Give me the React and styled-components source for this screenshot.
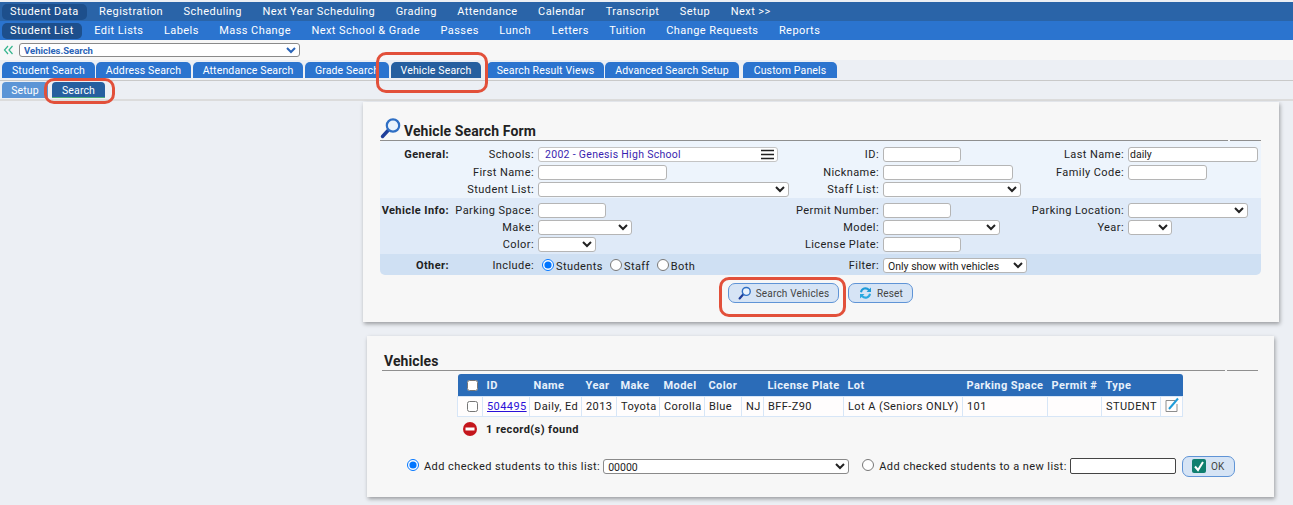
import React from "react";
import styled, { createGlobalStyle } from "styled-components";

const GlobalStyle = createGlobalStyle`
  html, body { margin: 0; padding: 0; background: #eceff4; }
  body { font-family: Roboto, "Liberation Sans", sans-serif; font-size: 11px; letter-spacing: 0.42px; color: #222; }
  * { box-sizing: border-box; }
  input, select, button { font-family: Roboto, "Liberation Sans", sans-serif; }
`;

const Page = styled.div`
  position: relative;
  width: 1293px;
  height: 505px;
  overflow: hidden;
  padding-top: 2px;
`;

/* top menus */
const MainNav = styled.div`
  height: 19px;
  display: flex;
  align-items: center;
  gap: 4px;
  padding-left: 2px;
  background: ${(p) => (p.$sub ? "#2b74cf" : "#2a64a8")};
`;

const NavItem = styled.div`
  height: 16px;
  line-height: 16px;
  padding: 0 8px;
  margin-right: 0.5px;
  border-radius: 5px;
  font-size: 11px;
  font-weight: 400;
  letter-spacing: 0.43px;
  color: #fff;
  white-space: nowrap;
  background: ${(p) => (p.$active ? "#1d4f8c" : "transparent")};
`;

const ViewBar = styled.div`
  height: 20px;
  display: flex;
  align-items: center;
  gap: 5px;
  padding-left: 3px;
  background: #f7f7f7;
`;

const BackChevrons = styled.svg`
  width: 11px;
  height: 10px;
  flex: none;
`;

const ViewSelect = styled.select`
  width: 281px;
  height: 14px;
  padding: 0;
  border: 1px solid #8a8a8a;
  border-radius: 3px;
  background: #fff;
  font-size: 9.5px;
  font-weight: 700;
  color: #2a64b8;
`;

/* tab rows */
const TabBar = styled.div`
  height: 21px;
  display: flex;
  align-items: flex-end;
  padding: 0 0 2px 2px;
  background: #eceff4;
  border-bottom: 1px solid #c9c9c9;
`;

const Tab = styled.div`
  width: ${(p) => p.$width}px;
  margin-left: ${(p) => p.$gap || 0}px;
  height: 16px;
  line-height: 17px;
  text-align: center;
  border-radius: 5px 5px 0 0;
  font-size: 10.5px;
  font-weight: 400;
  letter-spacing: 0.14px;
  color: #fff;
  white-space: nowrap;
  overflow: hidden;
  background: ${(p) => (p.$active ? "#265f9f" : "#2b74cf")};
`;

const SubTabBar = styled.div`
  height: 20px;
  display: flex;
  align-items: center;
  padding-left: 2px;
  background: #eceff4;
  border-bottom: 2px solid #dcdcdc;
`;

const SubTab = styled.div`
  width: ${(p) => p.$width}px;
  margin-left: ${(p) => p.$gap || 0}px;
  height: 16px;
  line-height: 17px;
  text-align: center;
  font-size: 10.5px;
  font-weight: 400;
  letter-spacing: 0.14px;
  color: #fff;
  border-radius: 4px 4px 0 0;
  background: ${(p) => (p.$active ? "#265f9f" : "#5c95d6")};
  border-bottom: 1px solid ${(p) => (p.$active ? "#4fae7a" : "#5c95d6")};
`;

/* page body */
const Content = styled.div`
  display: flex;
  flex-direction: column;
  align-items: flex-start;
  padding-left: 363px;
`;

const FormPanel = styled.div`
  width: 916px;
  height: 220px;
  margin-top: 1px;
  padding: 17px 18px 0 17px;
  background: #f7f7f7;
  box-shadow: 1px 2px 4px rgba(0, 0, 0, 0.35);
`;

const ResultPanel = styled.div`
  width: 907px;
  height: 161px;
  margin: 14px 0 0 4px;
  padding: 13px 16px 0 15px;
  background: #f7f7f7;
  box-shadow: 1px 2px 4px rgba(0, 0, 0, 0.35);
`;

const PanelTitle = styled.div`
  display: flex;
  align-items: flex-end;
  gap: 2px;
  height: 22px;
  padding: 0 0 1px ${(p) => p.$inset || 0}px;
  font-size: 14px;
  font-weight: 700;
  letter-spacing: 0.1px;
  color: #222;
  line-height: 16px;
  border-bottom: 1px solid #8f8f8f;
  position: relative;

  &::after {
    content: "";
    position: absolute;
    right: 31px;
    bottom: -1px;
    width: 2px;
    height: 1px;
    background: #f7f7f7;
  }
`;

/* form grid */
const FormSection = styled.div`
  display: grid;
  grid-template-columns: 70px 88px 252px 93px 140px 105px 133px;
  grid-auto-rows: ${(p) => p.$rowHeight || 17.5}px;
  align-items: center;
  padding: ${(p) => p.$padding || "0"};
  height: ${(p) => p.$height}px;
  background: ${(p) => p.$bg};
  border-radius: ${(p) => p.$radius || "0"};
`;

const SectionLabel = styled.div`
  font-weight: 700;
  text-align: right;
  padding-right: 1px;
  white-space: nowrap;
`;

const FieldLabel = styled.div`
  text-align: right;
  padding-right: 4px;
  white-space: nowrap;
  color: #222;
`;

const Field = styled.div`
  display: flex;
  align-items: center;
  min-width: 0;
  white-space: nowrap;
  padding-left: ${(p) => p.$inset || 0}px;
`;

const TextBox = styled.input`
  width: ${(p) => p.$width}px;
  height: 15px;
  padding: 0 1px;
  border: 1px solid #b5b5b5;
  border-radius: 3px;
  background: #fff;
  font-size: 10.5px;
  letter-spacing: 0;
  color: #222;
  outline: none;
`;

const Dropdown = styled.select`
  width: ${(p) => p.$width}px;
  height: 15px;
  padding: 0;
  border: 1px solid #b5b5b5;
  border-radius: 3px;
  background: #fff;
  font-size: 10.5px;
  letter-spacing: 0;
  color: #222;
  flex: none;
`;

const SchoolBox = styled.div`
  width: 240px;
  height: 15px;
  display: flex;
  align-items: center;
  justify-content: space-between;
  padding: 0 3px 0 6px;
  border: 1px solid #c4c4c4;
  border-radius: 3px;
  background: #fff;
  color: #3a1fb0;
  font-size: 10.5px;
  letter-spacing: 0.3px;
`;

const Burger = styled.svg`
  width: 13px;
  height: 11px;
`;

const RadioGroup = styled.label`
  display: flex;
  align-items: center;
  margin-right: 7px;
  padding-top: 2px;
`;

const Radio = styled.input.attrs({ type: "radio" })`
  width: 12px;
  height: 12px;
  margin: 0 2px 3px 0;
`;

/* buttons under the form */
const ButtonRow = styled.div`
  display: flex;
  justify-content: flex-start;
  gap: 9px;
  padding: 8px 0 0 348px;
`;

const ActionButton = styled.button`
  width: ${(p) => p.$width}px;
  height: 20px;
  display: flex;
  align-items: center;
  justify-content: center;
  gap: 4px;
  padding: 0;
  border: 1px solid #5f94d6;
  border-radius: 7px;
  background: #d6e4f5;
  font-size: 10px;
  letter-spacing: 0.2px;
  color: #444;
`;

/* results */
const TableWrap = styled.div`
  margin: 3px 0 0 75px;
  width: 725px;
`;

const Grid = styled.table`
  width: 725px;
  table-layout: fixed;
  border-collapse: collapse;
`;

const HeadRow = styled.tr`
  height: 22px;
  background: #2b6cb8;
`;

const Th = styled.th`
  padding: 1px 0 0 4px;
  text-align: left;
  font-size: 11px;
  font-weight: 700;
  color: #e8f1fb;
  white-space: nowrap;
  overflow: visible;

  &:first-child { border-radius: 3px 0 0 0; }
  &:last-child { border-radius: 0 3px 0 0; }
`;

const Td = styled.td`
  height: 19px;
  padding: 0 0 0 4px;
  background: #fffdfd;
  border: 1px solid #d7e6f7;
  font-size: 11px;
  white-space: nowrap;
  overflow: hidden;
`;

const CheckCell = styled.div`
  display: flex;
  justify-content: center;
`;

const Check = styled.input.attrs({ type: "checkbox" })`
  width: 11px;
  height: 11px;
  margin: 0;
`;

const IdLink = styled.a`
  color: #2a10d8;
  text-decoration: underline;
`;

const RecordRow = styled.div`
  display: flex;
  align-items: center;
  gap: 9px;
  height: 25px;
  padding-left: 6px;
  font-weight: 700;
  font-size: 11px;
`;

const ListRow = styled.div`
  display: flex;
  align-items: center;
  padding: 14px 0 0 25px;
`;

const ListRadio = styled.input.attrs({ type: "radio" })`
  width: 12px;
  height: 12px;
  margin: 0 5px 3px ${(p) => p.$gap || 0}px;
`;

const ListSelect = styled(Dropdown)`
  width: 246px;
  margin-left: 3px;
  border-color: #8a8a8a;
`;

const NewListBox = styled.input`
  width: 106px;
  height: 16px;
  margin-left: 3px;
  border: 1px solid #444;
  border-radius: 2px;
  background: #fff;
  outline: none;
`;

const OkButton = styled(ActionButton)`
  margin-left: 6px;
  height: 21px;
  gap: 5px;
`;

/* red call-outs drawn on top of the screenshot */
const Callout = styled.div`
  position: absolute;
  left: ${(p) => p.$left}px;
  top: ${(p) => p.$top}px;
  width: ${(p) => p.$width}px;
  height: ${(p) => p.$height}px;
  border: 3px solid #e2503a;
  border-radius: 10px;
  pointer-events: none;
`;

const MagnifierIcon = ({ size }) => (
  <svg width={size} height={size} viewBox="0 0 22 22">
    <line x1="2.5" y1="19.5" x2="8" y2="13.5" stroke="#1f3f9a" strokeWidth="3.4" strokeLinecap="round" />
    <circle cx="13" cy="8.5" r="6.2" fill="#eaf3fc" stroke="#2f6fc4" strokeWidth="2.2" />
  </svg>
);

const topItems = ["Student Data", "Registration", "Scheduling", "Next Year Scheduling", "Grading", "Attendance", "Calendar", "Transcript", "Setup", "Next >>"];
const subItems = ["Student List", "Edit Lists", "Labels", "Mass Change", "Next School & Grade", "Passes", "Lunch", "Letters", "Tuition", "Change Requests", "Reports"];
const tabs = [
  { label: "Student Search", width: 93 },
  { label: "Address Search", width: 95, gap: 1 },
  { label: "Attendance Search", width: 110, gap: 2 },
  { label: "Grade Search", width: 84, gap: 2 },
  { label: "Vehicle Search", width: 90, gap: 2, active: true },
  { label: "Search Result Views", width: 117, gap: 6 },
  { label: "Advanced Search Setup", width: 134, gap: 1 },
  { label: "Custom Panels", width: 94, gap: 4 },
];
const columns = [25, 47, 52, 35, 43, 45, 37, 22, 80, 119, 85, 54, 59, 22];
const heads = ["", "ID", "Name", "Year", "Make", "Model", "Color", "", "License Plate", "Lot", "Parking Space", "Permit #", "Type", ""];

const App = () => {
  return (
    <Page>
      <GlobalStyle />
      <MainNav>
        {topItems.map((item, i) => (
          <NavItem key={item} $active={i === 0}>{item}</NavItem>
        ))}
      </MainNav>
      <MainNav $sub>
        {subItems.map((item, i) => (
          <NavItem key={item} $active={i === 0}>{item}</NavItem>
        ))}
      </MainNav>

      <ViewBar>
        <BackChevrons viewBox="0 0 11 10">
          <path d="M5 1 1.5 5 5 9M9.5 1 6 5l3.5 4" fill="none" stroke="#35b58d" strokeWidth="1.2" />
        </BackChevrons>
        <ViewSelect defaultValue="v">
          <option value="v">Vehicles.Search</option>
        </ViewSelect>
      </ViewBar>

      <TabBar>
        {tabs.map((tab) => (
          <Tab key={tab.label} $width={tab.width} $gap={tab.gap} $active={tab.active}>{tab.label}</Tab>
        ))}
      </TabBar>
      <SubTabBar>
        <SubTab $width={46}>Setup</SubTab>
        <SubTab $width={53} $gap={4} $active>Search</SubTab>
      </SubTabBar>

      <Content>
        <FormPanel>
          <PanelTitle>
            <MagnifierIcon size={22} />
            Vehicle Search Form
          </PanelTitle>

          <FormSection $bg="#edf4fc" $height={57} $padding="5px 0 0" $radius="4px 4px 0 0">
            <SectionLabel>General:</SectionLabel>
            <FieldLabel>Schools:</FieldLabel>
            <Field>
              <SchoolBox>
                2002 - Genesis High School
                <Burger viewBox="0 0 13 11">
                  <path d="M0 1.5h13M0 5.5h13M0 9.5h13" stroke="#222" strokeWidth="1.6" />
                </Burger>
              </SchoolBox>
            </Field>
            <FieldLabel>ID:</FieldLabel>
            <Field><TextBox $width={78} /></Field>
            <FieldLabel>Last Name:</FieldLabel>
            <Field><TextBox $width={130} defaultValue="daily" /></Field>

            <div />
            <FieldLabel>First Name:</FieldLabel>
            <Field><TextBox $width={129} /></Field>
            <FieldLabel>Nickname:</FieldLabel>
            <Field><TextBox $width={130} /></Field>
            <FieldLabel>Family Code:</FieldLabel>
            <Field><TextBox $width={79} /></Field>

            <div />
            <FieldLabel>Student List:</FieldLabel>
            <Field><Dropdown $width={251} /></Field>
            <FieldLabel>Staff List:</FieldLabel>
            <Field><Dropdown $width={138} /></Field>
          </FormSection>

          <FormSection $bg="#dfeaf8" $height={56} $padding="4px 0 0" $rowHeight={17}>
            <SectionLabel>Vehicle Info:</SectionLabel>
            <FieldLabel>Parking Space:</FieldLabel>
            <Field><TextBox $width={68} /></Field>
            <FieldLabel>Permit Number:</FieldLabel>
            <Field><TextBox $width={68} /></Field>
            <FieldLabel>Parking Location:</FieldLabel>
            <Field><Dropdown $width={120} /></Field>

            <div />
            <FieldLabel>Make:</FieldLabel>
            <Field><Dropdown $width={94} /></Field>
            <FieldLabel>Model:</FieldLabel>
            <Field><Dropdown $width={117} /></Field>
            <FieldLabel>Year:</FieldLabel>
            <Field><Dropdown $width={44} /></Field>

            <div />
            <FieldLabel>Color:</FieldLabel>
            <Field><Dropdown $width={58} /></Field>
            <FieldLabel>License Plate:</FieldLabel>
            <Field><TextBox $width={78} /></Field>
          </FormSection>

          <FormSection $bg="#cfe0f3" $height={21} $rowHeight={22} $radius="0 0 5px 5px">
            <SectionLabel>Other:</SectionLabel>
            <FieldLabel>Include:</FieldLabel>
            <Field $inset={4}>
              <RadioGroup><Radio name="inc" defaultChecked />Students</RadioGroup>
              <RadioGroup><Radio name="inc" />Staff</RadioGroup>
              <RadioGroup><Radio name="inc" />Both</RadioGroup>
            </Field>
            <FieldLabel>Filter:</FieldLabel>
            <Field>
              <Dropdown $width={144} defaultValue="o">
                <option value="o">Only show with vehicles</option>
              </Dropdown>
            </Field>
          </FormSection>

          <ButtonRow>
            <ActionButton $width={111}>
              <MagnifierIcon size={14} />
              Search Vehicles
            </ActionButton>
            <ActionButton $width={65}>
              <svg width="15" height="14" viewBox="0 0 15 14">
                <path d="M2 6a5.5 5.5 0 0 1 9.5-3L13 1.500V6H8.500l1.500-1.500A3.500 3.500 0 0 0 4 6.500z" fill="#1f9bd8" />
                <path d="M13 8a5.500 5.500 0 0 1-9.500 3L2 12.500V8h4.500L5 9.500A3.500 3.500 0 0 0 11 7.500z" fill="#2aa9e0" />
              </svg>
              Reset
            </ActionButton>
          </ButtonRow>
        </FormPanel>

        <ResultPanel>
          <PanelTitle $inset={2}>Vehicles</PanelTitle>
          <TableWrap>
            <Grid>
              <colgroup>
                {columns.map((w, i) => (
                  <col key={i} width={w} />
                ))}
              </colgroup>
              <thead>
                <HeadRow>
                  {heads.map((head, i) => (
                    <Th key={i}>
                      {i === 0 ? <CheckCell><Check /></CheckCell> : head}
                    </Th>
                  ))}
                </HeadRow>
              </thead>
              <tbody>
                <tr>
                  <Td><CheckCell><Check /></CheckCell></Td>
                  <Td><IdLink href="#">504495</IdLink></Td>
                  <Td>Daily, Ed</Td>
                  <Td>2013</Td>
                  <Td>Toyota</Td>
                  <Td>Corolla</Td>
                  <Td>Blue</Td>
                  <Td>NJ</Td>
                  <Td>BFF-Z90</Td>
                  <Td>Lot A (Seniors ONLY)</Td>
                  <Td>101</Td>
                  <Td />
                  <Td>STUDENT</Td>
                  <Td>
                    <svg width="15" height="16" viewBox="0 0 15 16">
                      <path d="M1 3.500h9M1 3.500v11h11V7" fill="none" stroke="#8d8d8d" strokeWidth="1" />
                      <path d="M4 12 13 1.500" stroke="#1f9bd8" strokeWidth="2" />
                    </svg>
                  </Td>
                </tr>
              </tbody>
            </Grid>
            <RecordRow>
              <svg width="14" height="14" viewBox="0 0 14 14">
                <circle cx="7" cy="7" r="7" fill="#c4161c" />
                <rect x="2.500" y="5.500" width="9" height="3" fill="#fff" />
              </svg>
              1 record(s) found
            </RecordRow>
          </TableWrap>
          <ListRow>
            <ListRadio name="list" defaultChecked />
            Add checked students to this list:
            <ListSelect defaultValue="0">
              <option value="0">00000</option>
            </ListSelect>
            <ListRadio name="list" $gap={13} />
            Add checked students to a new list:
            <NewListBox />
            <OkButton $width={53}>
              <svg width="14" height="14" viewBox="0 0 14 14">
                <rect width="14" height="14" rx="2" fill="#0f7f6f" />
                <path d="M3 7.500 6 11l5-8" fill="none" stroke="#fff" strokeWidth="2" />
              </svg>
              OK
            </OkButton>
          </ListRow>
        </ResultPanel>
      </Content>

      <Callout $left={376} $top={52} $width={112} $height={41} />
      <Callout $left={44} $top={78} $width={71} $height={26} />
      <Callout $left={719} $top={277} $width={127} $height={40} />
    </Page>
  );
};

export default App;
